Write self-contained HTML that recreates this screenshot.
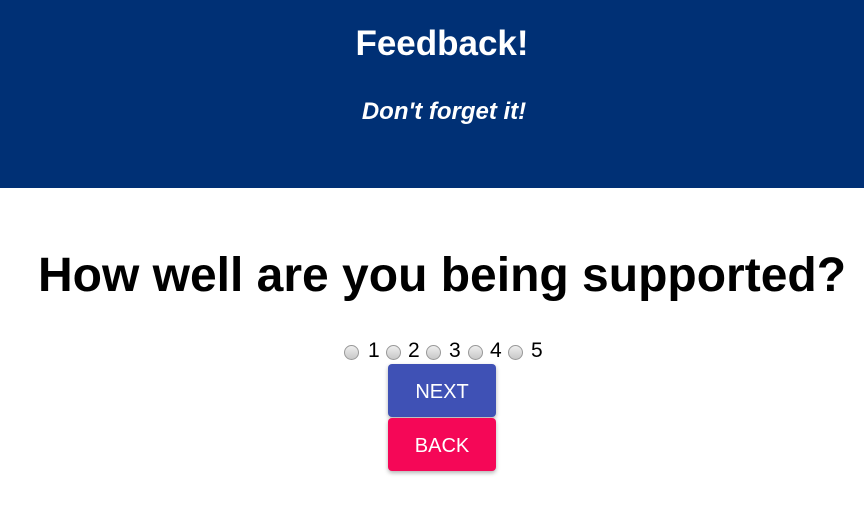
<!DOCTYPE html>
<html><head><style>
body{margin:0;width:864px;height:516px;overflow:hidden;background:#fff;font-family:"Liberation Sans",Arial,sans-serif;}
.hdr{position:absolute;left:0;top:0;width:864px;height:188px;background:#003075;color:#fff;}
.t1{position:absolute;left:0;width:884px;text-align:center;top:23px;font-size:35px;font-weight:bold;line-height:42px;}
.t2{position:absolute;left:0;width:888px;text-align:center;top:97px;font-size:24px;font-weight:bold;font-style:italic;line-height:30px;}
h1{position:absolute;left:0;width:884px;top:248px;margin:0;text-align:center;font-size:48px;line-height:56px;font-weight:bold;}
.r{position:absolute;top:345px;width:13px;height:13px;border-radius:50%;border:1px solid #999;background:linear-gradient(#eee,#c8c8c8);}
.n{position:absolute;top:339px;font-size:21px;line-height:24px;}
.btn{position:absolute;left:388px;width:108px;height:53px;border-radius:4px;color:#fff;font-size:20px;text-align:center;line-height:56px;box-shadow:0 2px 4px rgba(0,0,0,.3);}
</style></head><body>
<div class="hdr"><div class="t1">Feedback!</div><div class="t2">Don't forget it!</div></div>
<h1>How well are you being supported?</h1>
<span class="r" style="left:344px"></span><span class="n" style="left:368px">1</span>
<span class="r" style="left:386px"></span><span class="n" style="left:408px">2</span>
<span class="r" style="left:426px"></span><span class="n" style="left:449px">3</span>
<span class="r" style="left:468px"></span><span class="n" style="left:490px">4</span>
<span class="r" style="left:508px"></span><span class="n" style="left:531px">5</span>
<div class="btn" style="top:364px;background:#3f51b5">NEXT</div>
<div class="btn" style="top:418px;background:#f50757">BACK</div>
</body></html>
